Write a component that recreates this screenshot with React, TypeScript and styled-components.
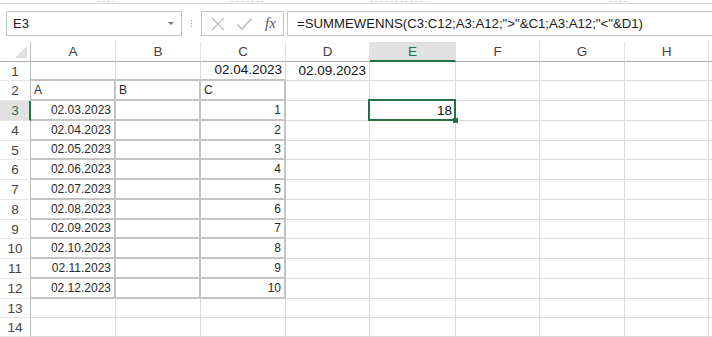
import React from "react";
import styled, { createGlobalStyle, css } from "styled-components";

const GlobalStyle = createGlobalStyle`
  html, body { margin: 0; padding: 0; background: #ffffff; }
  body { font-family: "Liberation Sans", Arial, sans-serif; overflow: hidden; }
`;

const GREEN = "#217346";
const GRID = "#dadada";
const TABLE = "#c4c4c4";

const colWidths = [31, 85, 85, 85, 84, 86, 84, 85, 84];
const rowHeights = [19, 20, 20, 20, 19, 20, 20, 20, 19, 20, 20, 20, 19, 19];
const colNames = ["A", "B", "C", "D", "E", "F", "G", "H"];

const Page = styled.div`
  display: flex;
  flex-direction: column;
  width: 712px;
  height: 337px;
  overflow: hidden;
`;

const RibbonEdge = styled.div`
  height: 3px;
  border-bottom: 1px solid #d4d4d4;
  display: flex;
  align-items: flex-start;
  overflow: hidden;
`;

/* the ribbon group captions are cut off by the screenshot: only a faint sliver shows */
const RibbonSliver = styled.span<{ $x: number; $w: number }>`
  margin-left: ${(p) => p.$x}px;
  width: ${(p) => p.$w}px;
  height: 1px;
  margin-top: 1px;
  background: repeating-linear-gradient(90deg, #d0d0d0 0 3px, transparent 3px 5px);
`;

const FormulaBar = styled.div`
  margin-top: 7px;
  height: 25px;
  display: flex;
  align-items: stretch;
  padding-left: 6px;
`;

const NameBox = styled.div`
  width: 176px;
  box-sizing: border-box;
  border: 1px solid #c6c6c6;
  display: flex;
  align-items: center;
  justify-content: space-between;
  padding: 0 7px 0 6px;
  font-size: 13px;
  color: #222;
`;

const DropArrow = styled.span`
  width: 0;
  height: 0;
  border-left: 3px solid transparent;
  border-right: 3px solid transparent;
  border-top: 3px solid #777;
`;

const Grip = styled.div`
  width: 19px;
  display: flex;
  flex-direction: column;
  align-items: center;
  justify-content: center;
  gap: 2px;
  & > span {
    width: 1px;
    height: 1px;
    background: #9a9a9a;
  }
`;

const FxBox = styled.div`
  width: 83px;
  box-sizing: border-box;
  border: 1px solid #c6c6c6;
  display: flex;
  align-items: center;
  padding-left: 8px;
  gap: 10px;
`;

const FxLabel = styled.span`
  font-family: "Liberation Serif", "DejaVu Serif", serif;
  font-style: italic;
  font-size: 15px;
  color: #555;
  margin-left: 2px;
`;

const FormulaInput = styled.div`
  flex: 1;
  margin-left: 3px;
  box-sizing: border-box;
  border: 1px solid #c6c6c6;
  border-right: none;
  display: flex;
  align-items: center;
  padding-left: 9px;
  font-size: 13.2px;
  color: #1a1a1a;
  white-space: nowrap;
`;

const Sheet = styled.div`
  margin-top: 6px;
  display: grid;
  grid-template-columns: ${colWidths.map((w) => w + "px").join(" ")} 1fr;
  grid-template-rows: 20px ${rowHeights.map((h) => h + "px").join(" ")};
`;

const Corner = styled.div`
  box-sizing: border-box;
  border-right: 1px solid #bcbcbc;
  border-bottom: 1px solid #ababab;
  display: flex;
  align-items: flex-end;
  justify-content: flex-end;
  padding: 0 3px 3px 0;
`;

const CornerTriangle = styled.span`
  width: 0;
  height: 0;
  border-left: 12px solid transparent;
  border-bottom: 12px solid #dfdfdf;
`;

const ColHeader = styled.div<{ $active?: boolean }>`
  box-sizing: border-box;
  border-right: 1px solid #e3e3e3;
  border-bottom: 1px solid #ababab;
  display: flex;
  align-items: center;
  justify-content: center;
  font-size: 13.5px;
  color: #444;
  ${(p) =>
    p.$active &&
    css`
      background: #e1e1e1;
      color: ${GREEN};
      border-bottom: 2px solid ${GREEN};
      padding-top: 1px;
    `}
`;

const RowHeader = styled.div<{ $active?: boolean }>`
  box-sizing: border-box;
  border-right: 1px solid #bcbcbc;
  border-bottom: 1px solid #e6e6e6;
  display: flex;
  align-items: center;
  justify-content: center;
  font-size: 13.5px;
  color: #444;
  ${(p) =>
    p.$active &&
    css`
      background: #e1e1e1;
      color: ${GREEN};
      border-right: 2px solid ${GREEN};
      padding-left: 1px;
    `}
`;

const Cell = styled.div<{
  $align?: "left" | "right";
  $small?: boolean;
  $tableRight?: boolean;
  $tableBottom?: boolean;
  $selected?: boolean;
}>`
  position: relative;
  box-sizing: border-box;
  border-right: 1px solid ${GRID};
  border-bottom: 1px solid ${GRID};
  display: flex;
  align-items: flex-end;
  justify-content: ${(p) => (p.$align === "right" ? "flex-end" : "flex-start")};
  padding: 0 3px 2px 3px;
  font-size: ${(p) => (p.$small ? "12px" : "13.5px")};
  color: ${(p) => (p.$small ? "#2a2a2a" : "#111")};
  white-space: nowrap;
  ${(p) => p.$tableRight && css`border-right: 2px solid ${TABLE};`}
  ${(p) => p.$tableBottom && css`border-bottom: 2px solid ${TABLE};`}
  ${(p) =>
    p.$selected &&
    css`
      z-index: 2;
      &::before {
        content: "";
        position: absolute;
        left: -2px;
        top: -2px;
        right: -1px;
        bottom: -1px;
        border: 2px solid ${GREEN};
        pointer-events: none;
      }
      &::after {
        content: "";
        position: absolute;
        right: -4px;
        bottom: -4px;
        width: 6px;
        height: 6px;
        background: ${GREEN};
        border: 1px solid #fff;
        border-top: none;
        border-left: none;
        box-sizing: border-box;
      }
    `}
`;

const Filler = styled.div`
  border-bottom: 1px solid ${GRID};
`;

const HeaderFiller = styled.div`
  border-bottom: 1px solid #ababab;
`;

type CellData = { text?: string; align?: "left" | "right"; small?: boolean };

const dates = [
  "02.03.2023",
  "02.04.2023",
  "02.05.2023",
  "02.06.2023",
  "02.07.2023",
  "02.08.2023",
  "02.09.2023",
  "02.10.2023",
  "02.11.2023",
  "02.12.2023",
];

function cellFor(row: number, col: number): CellData {
  if (row === 1) {
    if (col === 2) return { text: "02.04.2023", align: "right" };
    if (col === 3) return { text: "02.09.2023", align: "right" };
    return {};
  }
  if (row === 2 && col <= 2) return { text: colNames[col], align: "left", small: true };
  if (row >= 3 && row <= 12) {
    if (col === 0) return { text: dates[row - 3], align: "right", small: true };
    if (col === 2) return { text: String(row - 2), align: "right", small: true };
    if (col === 1) return { small: true };
  }
  if (row === 3 && col === 4) return { text: "18", align: "right" };
  return {};
}

export default function App() {
  const activeRow = 3;
  const activeCol = 4;
  return (
    <Page>
      <GlobalStyle />
      <RibbonEdge>
        <RibbonSliver $x={97} $w={16} />
        <RibbonSliver $x={118} $w={34} />
        <RibbonSliver $x={105} $w={56} />
        <RibbonSliver $x={183} $w={17} />
      </RibbonEdge>
      <FormulaBar>
        <NameBox>
          <span>E3</span>
          <DropArrow />
        </NameBox>
        <Grip>
          <span />
          <span />
          <span />
        </Grip>
        <FxBox>
          <svg width="16" height="16" viewBox="0 0 16 16">
            <path d="M2 2 L14 14 M14 2 L2 14" stroke="#bdbdbd" strokeWidth="1.3" fill="none" />
          </svg>
          <svg width="17" height="16" viewBox="0 0 17 16">
            <path d="M1.5 8.5 L6 13 L15.5 2.5" stroke="#bdbdbd" strokeWidth="1.6" fill="none" />
          </svg>
          <FxLabel>fx</FxLabel>
        </FxBox>
        <FormulaInput>=SUMMEWENNS(C3:C12;A3:A12;"&gt;"&amp;C1;A3:A12;"&lt;"&amp;D1)</FormulaInput>
      </FormulaBar>
      <Sheet>
        <Corner>
          <CornerTriangle />
        </Corner>
        {colNames.map((c, i) => (
          <ColHeader key={c} $active={i === activeCol}>
            {c}
          </ColHeader>
        ))}
        <HeaderFiller />
        {rowHeights.map((_, ri) => {
          const row = ri + 1;
          return (
            <React.Fragment key={row}>
              <RowHeader $active={row === activeRow}>{row}</RowHeader>
              {colNames.map((_, ci) => {
                const d = cellFor(row, ci);
                const inTable = row >= 2 && row <= 12 && ci <= 2;
                const tableBottom = row >= 1 && row <= 12 && ci <= 2;
                return (
                  <Cell
                    key={ci}
                    $align={d.align}
                    $small={d.small}
                    $tableRight={inTable}
                    $tableBottom={tableBottom}
                    $selected={row === activeRow && ci === activeCol}
                  >
                    {d.text}
                  </Cell>
                );
              })}
              <Filler />
            </React.Fragment>
          );
        })}
      </Sheet>
    </Page>
  );
}
